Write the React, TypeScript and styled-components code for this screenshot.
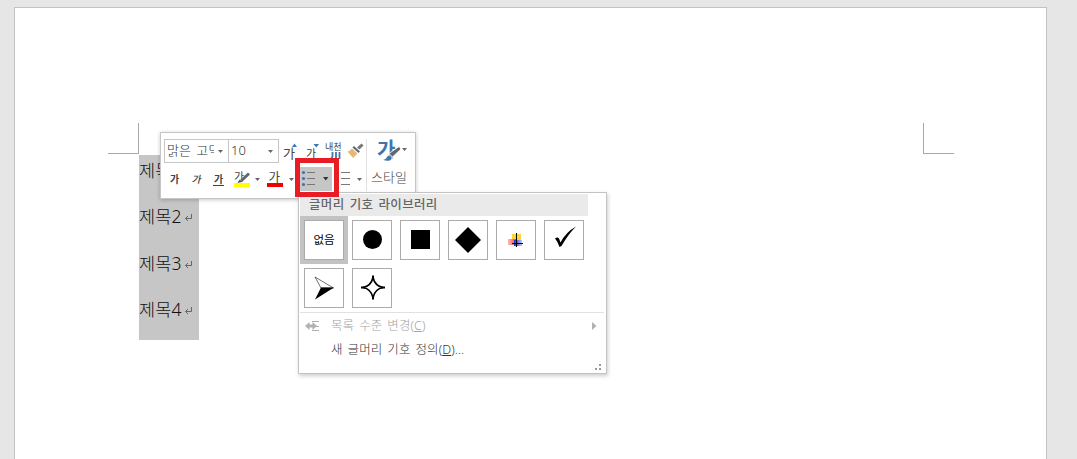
import React from 'react'
import styled, { createGlobalStyle } from 'styled-components'

const FONT = '"Noto Sans", "Noto Sans CJK KR", sans-serif'

const GlobalStyle = createGlobalStyle`
  * {
    box-sizing: border-box;
  }
  body {
    margin: 0;
    background: #e6e6e6;
    font-family: ${FONT};
    overflow: hidden;
  }
  svg {
    display: block;
    flex: none;
  }
`

const Workspace = styled.div`
  height: 459px;
  padding: 7px 30px 0 14px;
  overflow: hidden;
  background: #e6e6e6;
`

const Page = styled.div`
  height: 100%;
  padding: 115px 92px 0 93px;
  background: #fff;
  border: 1px solid #c3c3c3;
  border-bottom: none;
`

const MarginRow = styled.div`
  display: flex;
  justify-content: space-between;
`

const CornerMark = styled.div<{ $side: 'left' | 'right' }>`
  width: 31px;
  height: 31px;
  border-bottom: 1px solid #a9a9a9;
  border-${({ $side }) => ($side === 'left' ? 'right' : 'left')}: 1px solid #a9a9a9;
`

const Selection = styled.div`
  width: 60px;
  height: 185px;
  margin: 1px 0 0 31px;
  background: #c6c6c6;
`

const Paragraph = styled.div`
  display: flex;
  height: 46.4px;
  font-size: 17.5px;
  font-weight: 300;
  line-height: 30px;
  letter-spacing: 0.1px;
  color: #111;
  white-space: nowrap;
`

const ReturnMark = styled.svg`
  margin: 13px 0 0 2px;
`

const MiniToolbar = styled.div`
  position: absolute;
  left: 160px;
  top: 132px;
  display: flex;
  width: 256px;
  height: 67px;
  padding: 6px 0 0 3px;
  background: #fff;
  border: 1px solid #c6c6c6;
  box-shadow: 0 1px 4px rgba(0, 0, 0, 0.22);
`

const Tools = styled.div`
  width: 202px;
`

const ToolRow = styled.div`
  display: flex;
  height: 24px;
  &:last-child {
    height: 26px;
    margin-top: 4px;
  }
`

const Combo = styled.div<{ $width: number }>`
  display: flex;
  align-items: center;
  justify-content: space-between;
  width: ${({ $width }) => $width}px;
  height: 24px;
  padding: 0 5px 0 2px;
  border: 1px solid #c6c6c6;
  font-size: 13px;
  font-weight: 300;
  line-height: 20px;
  color: #333;
  & + & {
    margin-left: -1px;
  }
`

const ComboText = styled.span`
  flex: 1;
  height: 20px;
  margin: -2px 4px 0 0;
  overflow: hidden;
  white-space: nowrap;
  word-spacing: 2px;
`

const Tool = styled.div<{ $width?: number; $active?: boolean }>`
  display: flex;
  align-items: center;
  width: ${({ $width }) => $width || 22}px;
  height: 24px;
  background: ${({ $active }) => ($active ? '#c6c6c6' : 'transparent')};
`

const StyleTool = styled.div`
  flex: 1;
  height: 52px;
  padding-left: 4px;
  border-left: 1px solid #e1e1e1;
`

const StyleLabel = styled.div`
  height: 18px;
  font-size: 13px;
  font-weight: 300;
  line-height: 18px;
  color: #444;
  white-space: nowrap;
`

const Menu = styled.div`
  position: absolute;
  left: 298px;
  top: 192px;
  width: 309px;
  height: 182px;
  padding: 1px;
  background: #fff;
  border: 1px solid #c3c3c3;
  box-shadow: 1px 2px 4px rgba(0, 0, 0, 0.2);
`

const MenuHeader = styled.div`
  width: 288px;
  height: 22px;
  padding-left: 9px;
  background: #eaeaea;
  font-size: 12.5px;
  font-weight: 500;
  line-height: 21px;
  letter-spacing: 0.35px;
  word-spacing: 1.5px;
  color: #666;
`

const Gallery = styled.div`
  display: grid;
  grid-template-columns: repeat(6, 48px);
  grid-auto-rows: 48px;
  height: 96px;
`

const GalleryItem = styled.div<{ $selected?: boolean }>`
  padding: 4px;
  background: ${({ $selected }) => ($selected ? '#c3c3c3' : 'transparent')};
`

const Swatch = styled.div`
  display: flex;
  align-items: center;
  justify-content: center;
  width: 40px;
  height: 40px;
  background: #fff;
  border: 1px solid #ababab;
  font-size: 11.5px;
  line-height: 16px;
  color: #000;
`

const MenuItem = styled.div<{ $disabled?: boolean }>`
  display: flex;
  align-items: center;
  height: 24px;
  padding: 2px 8px 0 5px;
  font-size: 12.5px;
  font-weight: 300;
  letter-spacing: 0.1px;
  word-spacing: 1.6px;
  color: ${({ $disabled }) => ($disabled ? '#a3a3a3' : '#333')};
`

const MenuIcon = styled.div`
  width: 26px;
`

const MenuLabel = styled.div`
  flex: 1;
  line-height: 22px;
  white-space: nowrap;
`

const MenuLine = styled.div`
  width: 304px;
  height: 1px;
  background: #e1e1e1;
`

const Grip = styled.svg`
  margin: 3px 3px 0 auto;
`

const Callout = styled.div`
  position: absolute;
  left: 295px;
  top: 158px;
  width: 44px;
  height: 39px;
  border: 5px solid #e81c24;
`

interface GlyphProps {
  x: number
  y: number
  size: number
  weight?: number
  fill?: string
  children: string
}

const Glyph = ({ x, y, size, weight = 400, fill = '#444', children }: GlyphProps) => (
  <text x={x} y={y} fontSize={size} fontWeight={weight} fill={fill} fontFamily={FONT}>
    {children}
  </text>
)

const Caret = ({ x, y }: { x: number; y: number }) => (
  <path d={`M${x} ${y}h5l-2.5 3z`} fill="#666" />
)

const ComboCaret = () => (
  <svg width="5" height="3">
    <Caret x={0} y={0} />
  </svg>
)

const GrowFont = () => (
  <svg width="22" height="24">
    <Glyph x={4} y={19} size={13}>가</Glyph>
    <path d="M13 8l2.500-3.500L18 8z" fill="#3f75ad" />
  </svg>
)

const ShrinkFont = () => (
  <svg width="22" height="24">
    <Glyph x={5} y={19} size={11}>가</Glyph>
    <path d="M12.500 5h5.500l-2.700 3.500z" fill="#3f75ad" />
  </svg>
)

const PhoneticGuide = () => (
  <svg width="22" height="24">
    <Glyph x={2} y={11} size={9}>내천</Glyph>
    <path d="M9.500 13v4q0 2-2 3M13 13v6M16.500 13v7" fill="none" stroke="#3f75ad" strokeWidth="1.800" />
  </svg>
)

const FormatPainter = () => (
  <svg width="21" height="24">
    <path d="M16.500 4.500l2 2-4 4-2.500-2z" fill="#777" />
    <path d="M9 7l6 5.500-1.500 1.500L7.500 8.500z" fill="#666" />
    <path d="M7 9.500l5.500 5-4.500 4.500L2.500 12.500q2.500-.5 4.500-3z" fill="#e5b878" />
  </svg>
)

const Highlighter = () => (
  <svg width="35" height="24">
    <Glyph x={4} y={13.500} size={11}>가</Glyph>
    <path d="M19 6.500L11 14" stroke="#666" strokeWidth="3" />
    <path d="M7.500 16l2-3.500 2.500 2.500z" fill="#555" />
    <path d="M4 16h16v4H4z" fill="#ffff00" />
    <Caret x={25} y={11} />
  </svg>
)

const FontColor = () => (
  <svg width="36" height="24">
    <Glyph x={3.500} y={14.500} size={12.500}>가</Glyph>
    <path d="M2 16h16v4H2z" fill="#f00000" />
    <Caret x={24} y={11} />
  </svg>
)

const Bullets = () => (
  <svg width="32" height="24">
    <g fill="#3f75ad">
      <circle cx="3.500" cy="5.500" r="1.600" />
      <circle cx="3.500" cy="11.500" r="1.600" />
      <circle cx="3.500" cy="17.500" r="1.600" />
    </g>
    <path d="M7 5.500h8M7 11.500h8M7 17.500h8" stroke="#777" />
    <path d="M23 10h5.500l-2.750 3.500z" fill="#333" />
  </svg>
)

const Numbering = () => (
  <svg width="34" height="24">
    <path d="M9 5.500h9M9 11.500h9M9 17.500h9" stroke="#777" />
    <Caret x={25} y={11} />
  </svg>
)

const StyleIcon = () => (
  <svg width="42" height="29">
    <Glyph x={6} y={18} size={20} weight={700} fill="#3f75ad">가</Glyph>
    <path d="M18 14.500L28 7.500l2 2.500-8.500 8z" fill="#666" stroke="#fff" strokeWidth=".8" />
    <path d="M12 20.500q3 0 4-3 2-2.500 4.500 0 1 4-3 4.500-3 .5-5.500-1.500z" fill="#3f75ad" stroke="#fff" strokeWidth=".5" />
    <Caret x={31} y={9} />
  </svg>
)

const DiscBullet = () => (
  <svg width="38" height="38">
    <circle cx="19.500" cy="18.500" r="9.500" />
  </svg>
)

const SquareBullet = () => (
  <svg width="38" height="38">
    <path d="M10 9h19v19H10z" />
  </svg>
)

const DiamondBullet = () => (
  <svg width="38" height="38">
    <path d="M19 6l13 13-13 13L6 19z" />
  </svg>
)

const PictureBullet = () => (
  <svg width="38" height="38">
    <defs>
      <linearGradient id="redFade">
        <stop offset="0" stopColor="#fbb" />
        <stop offset="1" stopColor="#f44848" />
      </linearGradient>
      <linearGradient id="blueFade">
        <stop offset="0" stopColor="#2028d0" />
        <stop offset="1" stopColor="#c5c9ff" />
      </linearGradient>
    </defs>
    <path d="M15 13h9v9h-9z" fill="#ffd43b" />
    <path d="M11 18h8v6h-8z" fill="url(#redFade)" />
    <path d="M17 19h8v6h-8z" fill="url(#blueFade)" />
    <path d="M19.500 12v14M15 22.500h11" stroke="#000" />
  </svg>
)

const CheckBullet = () => (
  <svg width="38" height="38">
    <path d="M10 17.500q2.500-2 4 0l1.500 4Q21 11 31 5.500q-8 8-14.500 19.500l-2 1q-1.500-5-4.500-8.500z" />
  </svg>
)

const ArrowBullet = () => (
  <svg width="38" height="38">
    <path d="M10 8L28.500 19H16z" fill="#fff" stroke="#333" strokeWidth=".7" />
    <path d="M29 18.500L10 30.500l6-12z" />
  </svg>
)

const StarBullet = () => (
  <svg width="38" height="38">
    <path d="M20 8.500q2 8.500 10 10-8 1.500-10 10-2-8.500-10-10 8-1.500 10-10z" fill="#fff" stroke="#000" strokeWidth="1.700" />
    <path d="M19 6.500h2v4h-2zM19 26.500h2v4h-2zM8 17.500h4v2H8zM28 17.500h4v2h-4z" />
  </svg>
)

const LevelIcon = () => (
  <svg width="15" height="12">
    <path d="M0 6l4.500-4v2.500h3V2L12 6 7.500 10V7.500h-3V10z" fill="#b1b1b1" />
    <path d="M7 1.500h7M11 6.500h3M7 10.500h7" stroke="#b1b1b1" />
  </svg>
)

const BULLETS = [DiscBullet, SquareBullet, DiamondBullet, PictureBullet, CheckBullet, ArrowBullet, StarBullet]

const TITLES = ['제목1', '제목2', '제목3', '제목4']

export default function App() {
  return (
    <>
      <GlobalStyle />
      <Workspace>
        <Page>
          <MarginRow>
            <CornerMark $side="left" />
            <CornerMark $side="right" />
          </MarginRow>
          <Selection>
            {TITLES.map((title) => (
              <Paragraph key={title}>
                {title}
                <ReturnMark width="8" height="9">
                  <path d="M7.500 0v4.500H1.500M4 2L1.500 4.500 4 7" fill="none" stroke="#666" />
                </ReturnMark>
              </Paragraph>
            ))}
          </Selection>
        </Page>
      </Workspace>

      <MiniToolbar>
        <Tools>
          <ToolRow>
            <Combo $width={65}>
              <ComboText>맑은 고딕</ComboText>
              <ComboCaret />
            </Combo>
            <Combo $width={51}>
              <ComboText>10</ComboText>
              <ComboCaret />
            </Combo>
            <Tool><GrowFont /></Tool>
            <Tool><ShrinkFont /></Tool>
            <Tool><PhoneticGuide /></Tool>
            <Tool $width={21}><FormatPainter /></Tool>
          </ToolRow>
          <ToolRow>
            <Tool>
              <svg width="22" height="24">
                <Glyph x={6} y={16} size={10} weight={600}>가</Glyph>
              </svg>
            </Tool>
            <Tool>
              <svg width="22" height="24">
                <g transform="skewX(-12)">
                  <Glyph x={9} y={16} size={10} weight={500}>가</Glyph>
                </g>
              </svg>
            </Tool>
            <Tool>
              <svg width="22" height="24">
                <Glyph x={6} y={16} size={10} weight={600}>가</Glyph>
                <path d="M5 18.500h11" stroke="#444" />
              </svg>
            </Tool>
            <Tool $width={35}><Highlighter /></Tool>
            <Tool $width={35}><FontColor /></Tool>
            <Tool $width={32} $active><Bullets /></Tool>
            <Tool $width={34}><Numbering /></Tool>
          </ToolRow>
        </Tools>
        <StyleTool>
          <StyleIcon />
          <StyleLabel>스타일</StyleLabel>
        </StyleTool>
      </MiniToolbar>

      <Menu>
        <MenuHeader>글머리 기호 라이브러리</MenuHeader>
        <Gallery>
          <GalleryItem $selected>
            <Swatch>없음</Swatch>
          </GalleryItem>
          {BULLETS.map((Bullet, i) => (
            <GalleryItem key={i}>
              <Swatch><Bullet /></Swatch>
            </GalleryItem>
          ))}
        </Gallery>
        <MenuLine />
        <MenuItem $disabled>
          <MenuIcon><LevelIcon /></MenuIcon>
          <MenuLabel>목록 수준 변경(<u>C</u>)</MenuLabel>
          <svg width="5" height="8">
            <path d="M0 0l4.500 4L0 8z" fill="#b1b1b1" />
          </svg>
        </MenuItem>
        <MenuItem>
          <MenuIcon />
          <MenuLabel>새 글머리 기호 정의(<u>D</u>)...</MenuLabel>
        </MenuItem>
        <Grip width="7" height="7">
          <path d="M4 0h2v2H4zM0 4h2v2H0zM4 4h2v2H4z" fill="#999" />
        </Grip>
      </Menu>

      <Callout />
    </>
  )
}
